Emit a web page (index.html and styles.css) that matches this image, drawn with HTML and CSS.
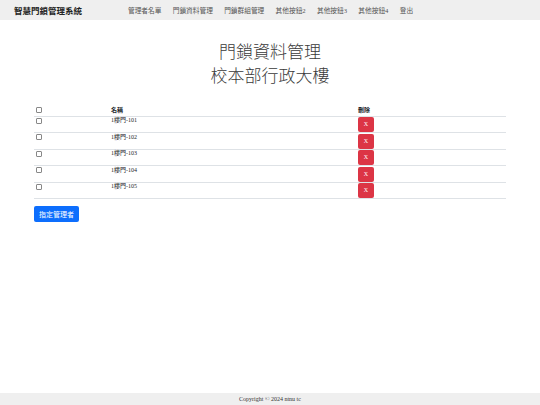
FILE: index.html
```html
<!DOCTYPE html>
<html lang="zh-Hant">
<head>
<meta charset="utf-8">
<title>門鎖資料管理</title>
<link rel="stylesheet" href="styles.css">
</head>
<body>
<div class="page">
  <nav class="navbar">
    <span class="brand">智慧門鎖管理系統</span>
    <ul class="nav-links">
      <li>管理者名單</li>
      <li>門鎖資料管理</li>
      <li>門鎖群組管理</li>
      <li>其他按鈕2</li>
      <li>其他按鈕3</li>
      <li>其他按鈕4</li>
      <li>登出</li>
    </ul>
  </nav>
  <main class="main">
    <h1 class="title">門鎖資料管理<br>校本部行政大樓</h1>
    <table class="lock-table">
      <thead>
        <tr>
          <th class="col-check"><span class="cb"></span></th>
          <th class="col-name">名稱</th>
          <th class="col-del">刪除</th>
        </tr>
      </thead>
      <tbody>
        <tr><td><span class="cb"></span></td><td>1樓門-101</td><td><span class="btn-del">X</span></td></tr>
        <tr><td><span class="cb"></span></td><td>1樓門-102</td><td><span class="btn-del">X</span></td></tr>
        <tr><td><span class="cb"></span></td><td>1樓門-103</td><td><span class="btn-del">X</span></td></tr>
        <tr><td><span class="cb"></span></td><td>1樓門-104</td><td><span class="btn-del">X</span></td></tr>
        <tr><td><span class="cb"></span></td><td>1樓門-105</td><td><span class="btn-del">X</span></td></tr>
      </tbody>
    </table>
    <div class="actions"><span class="btn-primary">指定管理者</span></div>
  </main>
  <footer class="footer">Copyright © 2024 ntnu tc</footer>
</div>
</body>
</html>
```

FILE: styles.css
```css
html, body {
  margin: 0;
  padding: 0;
  height: 100%;
}
body {
  font-family: "Liberation Serif", "Noto Sans CJK TC", serif;
  color: #212529;
  background: #fff;
}
.page {
  display: flex;
  flex-direction: column;
  height: 405px;
}
.navbar {
  display: flex;
  align-items: center;
  height: 20px;
  background: #efefef;
  padding: 0 0 0 14px;
}
.brand {
  font-family: "Liberation Sans", "Noto Sans CJK TC", sans-serif;
  font-weight: bold;
  font-size: 8.5px;
  color: #222;
  width: 114px;
}
.nav-links {
  display: flex;
  list-style: none;
  margin: 0;
  padding: 0;
  gap: 11.3px;
  font-size: 6.7px;
  color: #555;
}
.main {
  flex: 1;
  padding: 0 34px;
}
.title {
  margin: 19px 0 19px;
  text-align: center;
  font-family: "Noto Sans CJK TC", sans-serif;
  font-weight: 300;
  font-size: 17px;
  line-height: 24px;
  color: #3a3a3a;
}
.lock-table {
  width: 100%;
  border-collapse: collapse;
  font-size: 6px;
}
.lock-table th {
  text-align: left;
  font-weight: bold;
  padding: 0 2px 1px;
  height: 6px;
  line-height: 7px;
  border-bottom: 1px solid #dee2e6;
  font-family: "Liberation Sans", "Noto Sans CJK TC", sans-serif;
}
.lock-table td {
  vertical-align: top;
  padding: 0.5px 2px 0;
  height: 15px;
  border-bottom: 1px solid #dee2e6;
  line-height: 7px;
}
.col-check { width: 71px; }
.col-name { width: 243px; }
.cb {
  display: inline-block;
  width: 4px;
  height: 4px;
  border: 1px solid #888;
  border-radius: 1px;
  margin-top: 0.5px;
}
.btn-del {
  display: block;
  width: 16px;
  height: 15px;
  line-height: 15px;
  text-align: center;
  background: #dc3545;
  color: #fff;
  border-radius: 2px;
  font-size: 6px;
}
.actions {
  display: flex;
  margin-top: 7px;
}
.btn-primary {
  display: block;
  background: #0d6efd;
  color: #fff;
  font-family: "Noto Sans CJK TC", sans-serif;
  font-size: 7px;
  padding: 4px 5px;
  line-height: 8px;
  border-radius: 2px;
}
.footer {
  height: 12px;
  line-height: 12px;
  background: #efefef;
  text-align: center;
  font-size: 6px;
  color: #333;
}
```
